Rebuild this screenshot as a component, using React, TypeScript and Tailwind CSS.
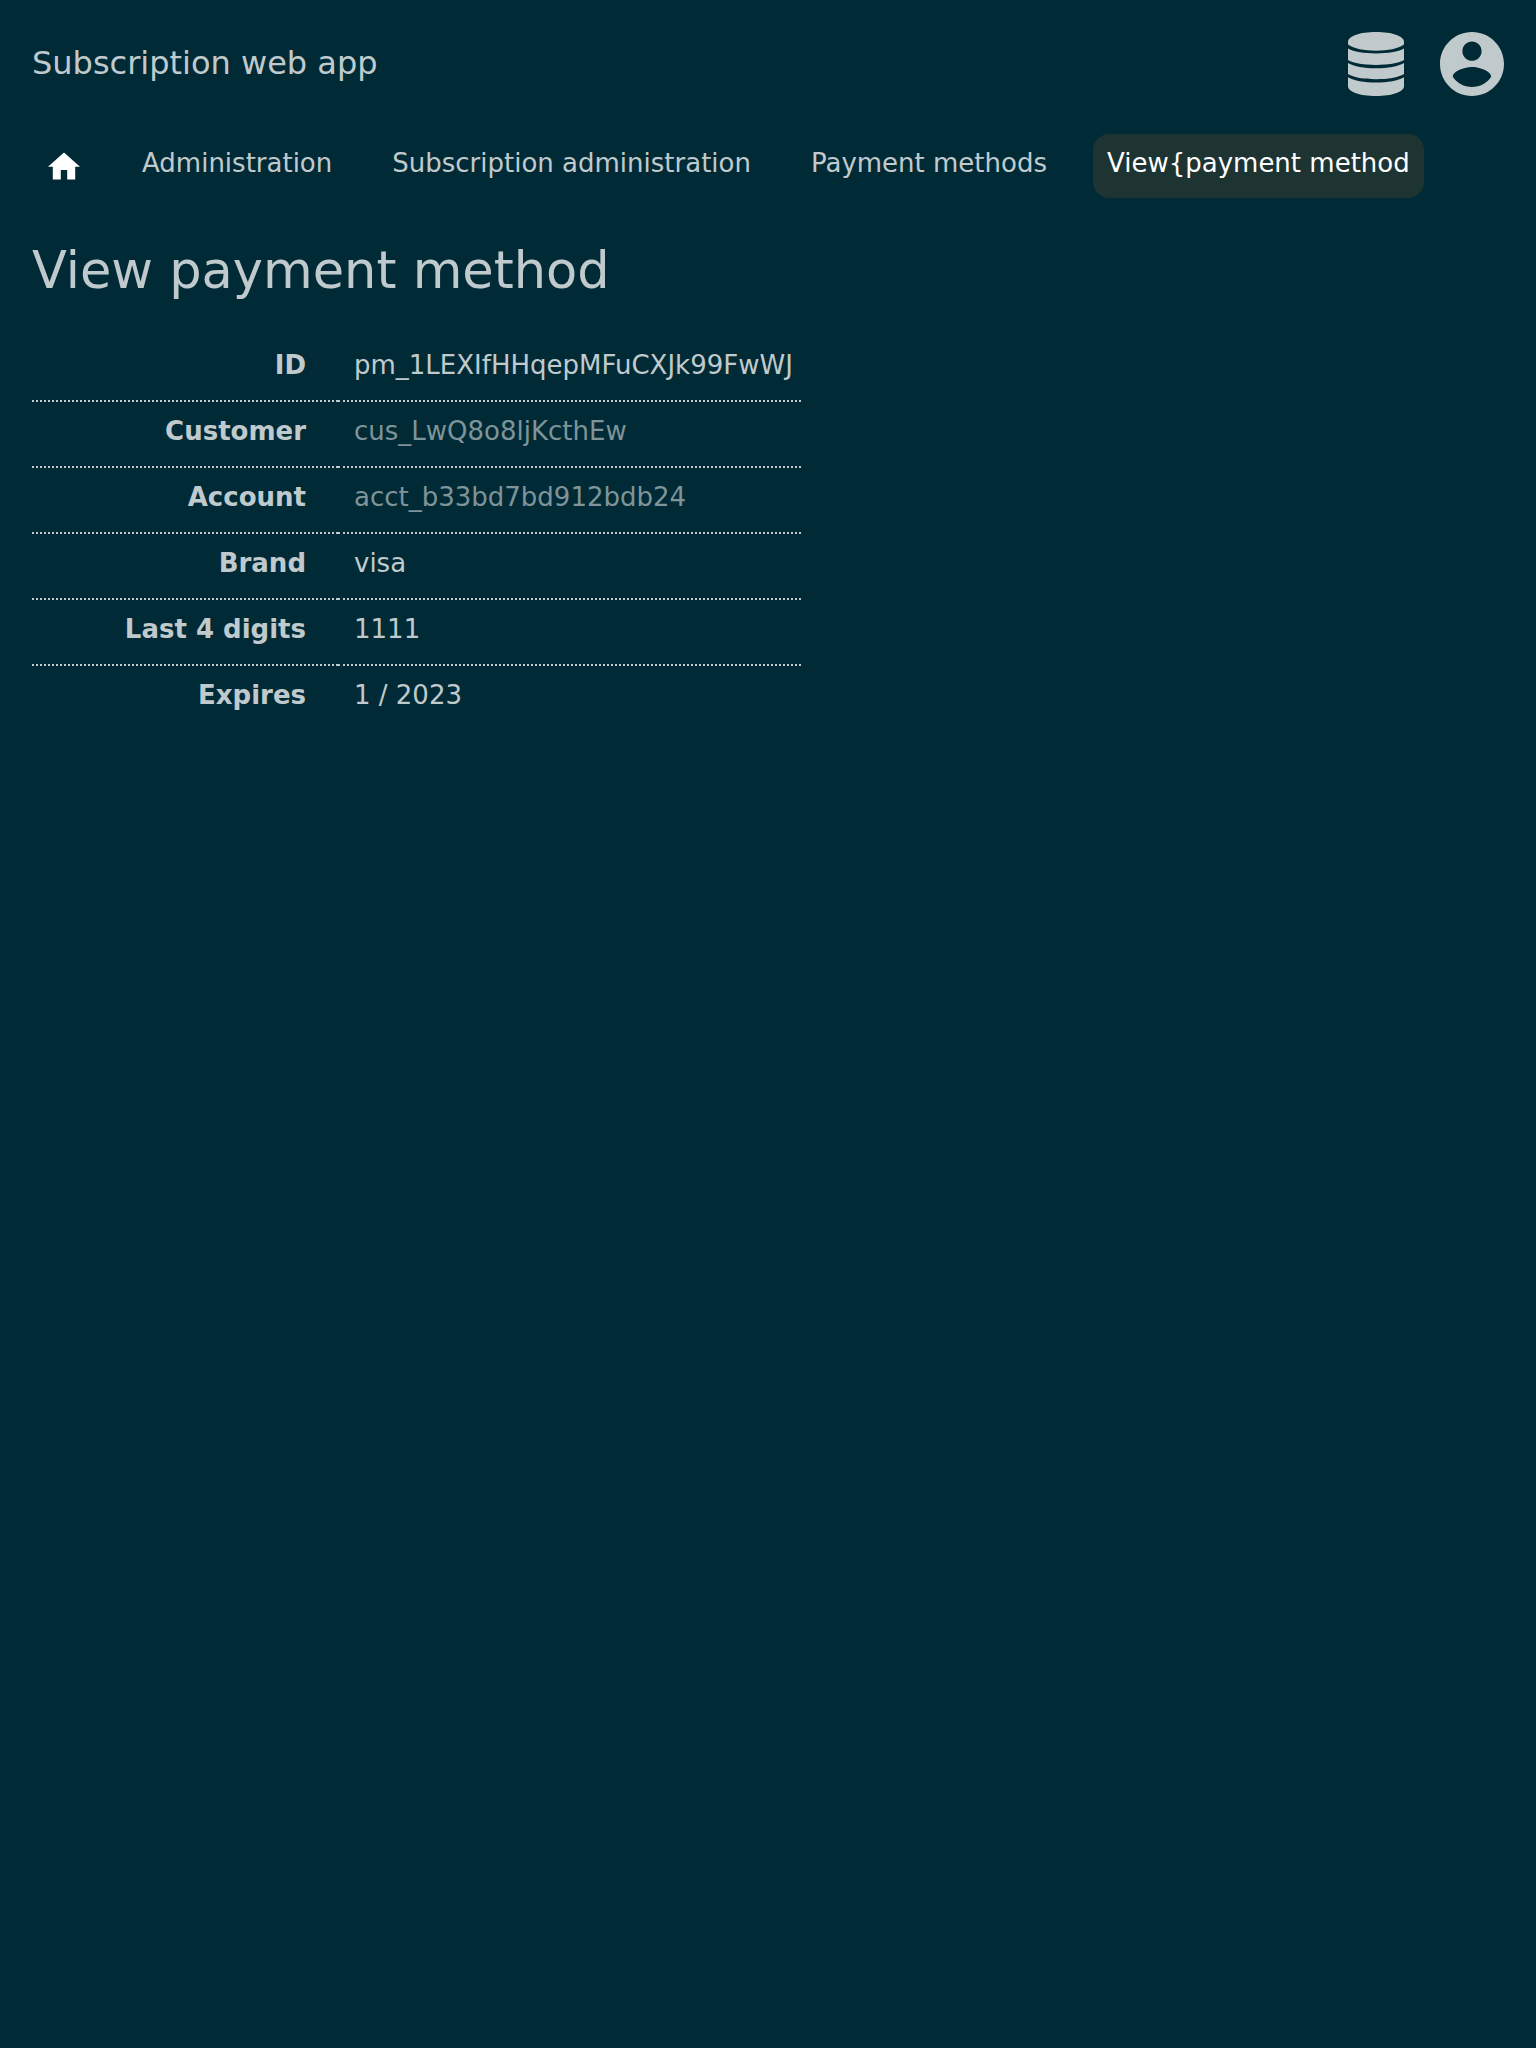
import React from "react";

const trail = ["Administration", "Subscription administration", "Payment methods"];

const rows: { label: string; value: string; href?: string }[] = [
  { label: "ID", value: "pm_1LEXIfHHqepMFuCXJk99FwWJ" },
  { label: "Customer", value: "cus_LwQ8o8ljKcthEw", href: "#customer" },
  { label: "Account", value: "acct_b33bd7bd912bdb24", href: "#account" },
  { label: "Brand", value: "visa" },
  { label: "Last 4 digits", value: "1111" },
  { label: "Expires", value: "1 / 2023" },
];

export default function App() {
  return (
    <div className="min-h-screen bg-[#002b36] p-8 font-['DejaVu_Sans',sans-serif] text-[26px] leading-[34px] text-[#c0cacd]">
      <header className="flex justify-between">
        <a href="#top" className="pt-3 text-[32px] leading-[38px]">Subscription web app</a>
        <div className="flex gap-8">
          <button type="button" aria-label="Administrator" className="size-16">
            <svg viewBox="0 0 64 64" className="size-16" fill="currentColor">
              <path d="M4 10C4 4 16 0 32 0s28 4 28 10v2.500c-6 4.200-16 6.200-28 6.200S10 16.700 4 12.500z" />
              <path d="M4 16.500c6 3.300 16 4.900 28 4.900s22-1.600 28-4.900V28c-6 3.300-16 4.900-28 4.900S10 31.300 4 28z" />
              <path d="M4 31c6 3.500 16 5.300 28 5.300S54 34.500 60 31v11c-6 3.500-16 5.200-28 5.200S10 45.500 4 42z" />
              <path d="M4 45.300c6 3.500 16 5.300 28 5.300s22-1.800 28-5.300V54c0 6-12 10-28 10S4 60 4 54z" />
            </svg>
          </button>
          <button type="button" aria-label="Account" className="size-16">
            <svg viewBox="2 2 20 20" className="size-16" fill="currentColor">
              <path d="M12 2C6.480 2 2 6.480 2 12s4.480 10 10 10 10-4.480 10-10S17.520 2 12 2zm0 3c1.660 0 3 1.340 3 3s-1.340 3-3 3-3-1.340-3-3 1.340-3 3-3zm0 14.200c-2.500 0-4.710-1.280-6-3.220.030-1.990 4-3.080 6-3.080 1.990 0 5.970 1.090 6 3.080-1.290 1.940-3.500 3.220-6 3.220z" />
            </svg>
          </button>
        </div>
      </header>
      <nav aria-label="Breadcrumb" className="mt-[38px] flex flex-wrap gap-8">
        <a href="#home" aria-label="Home" className="flex h-16 items-center px-4 text-white">
          <svg viewBox="2 1.5 20 20" className="size-8" fill="currentColor"><path d="M10 20v-6h4v6h5v-8h3L12 3 2 12h3v8z" /></svg>
        </a>
        {trail.map((t) => (
          <a key={t} href="#trail" className="h-16 px-3.5 pt-3">{t}</a>
        ))}
        <a href="#view" aria-current="page" className="h-16 rounded-2xl bg-[#1e3432] px-3.5 pt-3 text-white">{"View{payment method"}</a>
      </nav>
      <h1 className="mt-10 text-[51px] leading-[66px]">View payment method</h1>
      <table className="mt-8 border-collapse">
        <tbody>
          {rows.map((r) => (
            <tr key={r.label} className="group">
              <th scope="row" className="w-[306px] border-b-2 border-dotted border-[#c0cacd] pt-3 pr-8 pb-[18px] text-right font-bold group-last:border-0">{r.label}</th>
              <td className="border-b-2 border-dotted border-[#c0cacd] pt-3 pr-2 pb-[18px] pl-4 group-last:border-0">{r.href ? <a href={r.href} className="text-[#7f9499]">{r.value}</a> : r.value}</td>
            </tr>
          ))}
        </tbody>
      </table>
    </div>
  );
}
